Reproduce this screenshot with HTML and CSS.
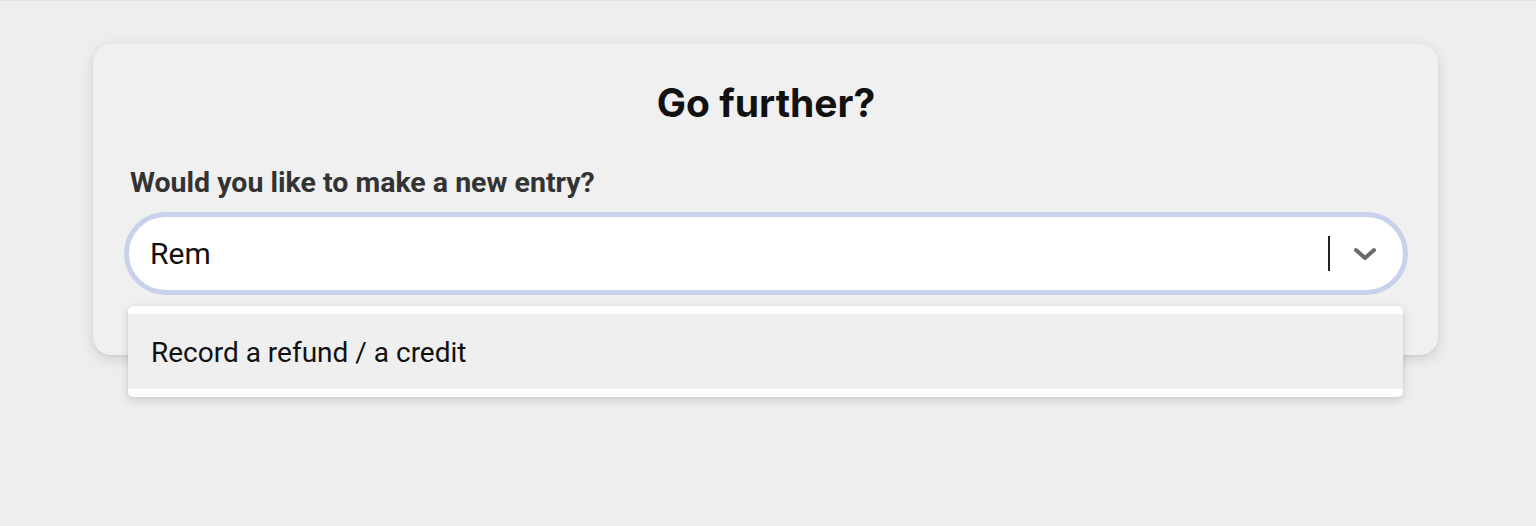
FILE: index.html
```html
<!DOCTYPE html>
<html lang="en">
<head>
<meta charset="utf-8">
<title>Go further?</title>
<link rel="stylesheet" href="styles.css">
</head>
<body>
  <div class="page">
    <section class="card">
      <h1 class="title">Go further?</h1>
      <label class="label" for="entry">Would you like to make a new entry?</label>
      <div class="select">
        <div class="control">
          <span class="value" id="entry">Rem</span>
          <span class="separator"></span>
          <span class="indicator">
            <svg width="24" height="14" viewBox="0 0 24 14" aria-hidden="true">
              <path d="M3 3 L12 11 L21 3" fill="none" stroke="#6b6b6b" stroke-width="4" stroke-linecap="round" stroke-linejoin="round"/>
            </svg>
          </span>
        </div>
        <div class="menu">
          <div class="option">Record a refund / a credit</div>
        </div>
      </div>
    </section>
  </div>
</body>
</html>
```
FILE: styles.css
```css
* { box-sizing: border-box; }

html, body {
  margin: 0;
  padding: 0;
  background: #eeeeee;
  font-family: Roboto, "Liberation Sans", Arial, sans-serif;
}

.page {
  height: 526px;
  padding-top: 44px;
  border-top: 1px solid #e2e2e2;
}

.card {
  width: 1345px;
  margin-left: 93px;
  margin-top: -1px;
  background: #f0f0f0;
  border-radius: 18px;
  padding: 35px 30px 60px 31px;
  box-shadow: 0 4px 14px rgba(0, 0, 0, 0.13), 0 1px 3px rgba(0, 0, 0, 0.05);
  display: flex;
  flex-direction: column;
}

.title {
  margin: 0;
  text-align: center;
  font-family: Inter, Roboto, "Liberation Sans", sans-serif;
  font-size: 39px;
  line-height: 48px;
  font-weight: 700;
  color: #111111;
}

.label {
  margin-top: 40px;
  padding-left: 6px;
  font-size: 28.5px;
  line-height: 32px;
  font-weight: 700;
  color: #333333;
}

.select {
  position: relative;
  margin-top: 13px;
}

.control {
  height: 83px;
  border: 5px solid #c9d2ec;
  border-radius: 42px;
  background: #ffffff;
  display: flex;
  align-items: center;
  padding-left: 21px;
  padding-right: 26px;
}

.value {
  flex: 1;
  font-size: 30px;
  color: #111111;
}

.separator {
  width: 2px;
  height: 35px;
  background: #222222;
  margin-right: 23px;
}

.indicator {
  display: flex;
  align-items: center;
}

.menu {
  position: absolute;
  left: 4px;
  right: 5px;
  top: 94px;
  background: #ffffff;
  border-radius: 5px;
  padding: 8px 0;
  box-shadow: 0 3px 10px rgba(0, 0, 0, 0.15), 0 0 2px rgba(0, 0, 0, 0.08);
}

.option {
  height: 75px;
  background: #efefef;
  display: flex;
  align-items: center;
  padding-left: 23px;
  padding-top: 2px;
  font-size: 28px;
  color: #111111;
}
```
